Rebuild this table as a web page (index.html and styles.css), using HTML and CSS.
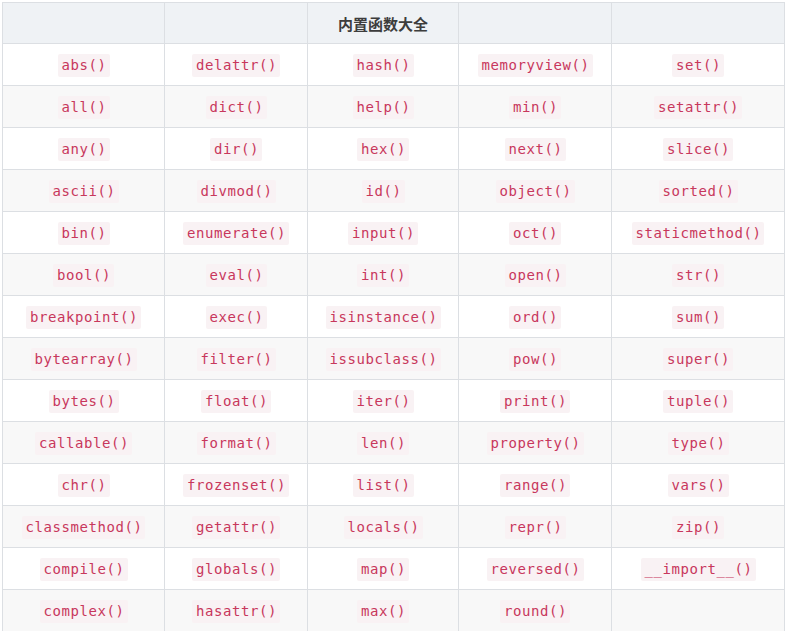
FILE: index.html
```html
<!DOCTYPE html>
<html lang="zh">
<head>
<meta charset="utf-8">
<title>内置函数大全</title>
<link rel="stylesheet" href="styles.css">
</head>
<body>
<table class="fn-table">
  <colgroup>
    <col class="c1"><col class="c2"><col class="c3"><col class="c4"><col class="c5">
  </colgroup>
  <thead>
    <tr><th></th><th></th><th>内置函数大全</th><th></th><th></th></tr>
  </thead>
  <tbody>
    <tr><td><code>abs()</code></td><td><code>delattr()</code></td><td><code>hash()</code></td><td><code>memoryview()</code></td><td><code>set()</code></td></tr>
    <tr><td><code>all()</code></td><td><code>dict()</code></td><td><code>help()</code></td><td><code>min()</code></td><td><code>setattr()</code></td></tr>
    <tr><td><code>any()</code></td><td><code>dir()</code></td><td><code>hex()</code></td><td><code>next()</code></td><td><code>slice()</code></td></tr>
    <tr><td><code>ascii()</code></td><td><code>divmod()</code></td><td><code>id()</code></td><td><code>object()</code></td><td><code>sorted()</code></td></tr>
    <tr><td><code>bin()</code></td><td><code>enumerate()</code></td><td><code>input()</code></td><td><code>oct()</code></td><td><code>staticmethod()</code></td></tr>
    <tr><td><code>bool()</code></td><td><code>eval()</code></td><td><code>int()</code></td><td><code>open()</code></td><td><code>str()</code></td></tr>
    <tr><td><code>breakpoint()</code></td><td><code>exec()</code></td><td><code>isinstance()</code></td><td><code>ord()</code></td><td><code>sum()</code></td></tr>
    <tr><td><code>bytearray()</code></td><td><code>filter()</code></td><td><code>issubclass()</code></td><td><code>pow()</code></td><td><code>super()</code></td></tr>
    <tr><td><code>bytes()</code></td><td><code>float()</code></td><td><code>iter()</code></td><td><code>print()</code></td><td><code>tuple()</code></td></tr>
    <tr><td><code>callable()</code></td><td><code>format()</code></td><td><code>len()</code></td><td><code>property()</code></td><td><code>type()</code></td></tr>
    <tr><td><code>chr()</code></td><td><code>frozenset()</code></td><td><code>list()</code></td><td><code>range()</code></td><td><code>vars()</code></td></tr>
    <tr><td><code>classmethod()</code></td><td><code>getattr()</code></td><td><code>locals()</code></td><td><code>repr()</code></td><td><code>zip()</code></td></tr>
    <tr><td><code>compile()</code></td><td><code>globals()</code></td><td><code>map()</code></td><td><code>reversed()</code></td><td><code>__import__()</code></td></tr>
    <tr><td><code>complex()</code></td><td><code>hasattr()</code></td><td><code>max()</code></td><td><code>round()</code></td><td></td></tr>
  </tbody>
</table>
</body>
</html>
```

FILE: styles.css
```css
html, body {
  margin: 0;
  padding: 0;
  background: #ffffff;
}
body {
  padding: 2px 0 0 2px;
  font-family: "Noto Sans CJK SC", "Noto Sans", sans-serif;
}
.fn-table {
  border-collapse: separate;
  border-spacing: 0;
  table-layout: fixed;
  width: 783px;
  border-top: 1px solid #dcdfe3;
  border-left: 1px solid #dcdfe3;
}
.c1 { width: 162px; }
.c2 { width: 143px; }
.c3 { width: 151px; }
.c4 { width: 153px; }
.c5 { width: 173px; }
.fn-table th,
.fn-table td {
  border-right: 1px solid #dcdfe3;
  border-bottom: 1px solid #dcdfe3;
  text-align: center;
  vertical-align: middle;
  padding: 0;
}
.fn-table th {
  height: 40px;
  background: #eff2f5;
  color: #3d3d3d;
  font-size: 15px;
  font-weight: bold;
}
.fn-table td {
  height: 40px;
  padding-bottom: 1px;
}
.fn-table tbody tr:nth-child(even) td {
  background: #f8f8f8;
}
.fn-table code {
  display: inline-block;
  font-family: "DejaVu Sans Mono", monospace;
  font-size: 14px;
  letter-spacing: 0.57px;
  line-height: 17px;
  padding: 3px 3px 3px 4px;
  color: #c8375c;
  background: #f9f2f4;
  border-radius: 2px;
}
```
